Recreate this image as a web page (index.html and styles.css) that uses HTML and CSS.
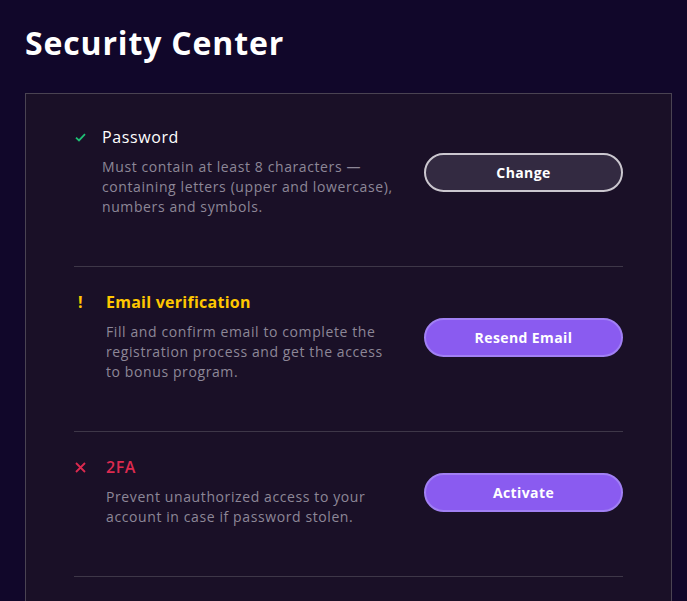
FILE: index.html
```html
<!DOCTYPE html>
<html lang="en">
<head>
<meta charset="utf-8">
<title>Security Center</title>
<link rel="stylesheet" href="styles.css">
</head>
<body>
<main class="page">
  <h1 class="page-title">Security Center</h1>
  <section class="card">
    <div class="row">
      <div class="info">
        <div class="head head--ok">
          <span class="icon icon--narrow">
            <svg width="11" height="9" viewBox="0 0 11 9"><path d="M1 4.6 L4 7.4 L10 1.2" fill="none" stroke="#1fbf75" stroke-width="1.8"/></svg>
          </span>
          <span class="title">Password</span>
        </div>
        <p class="desc">Must contain at least 8 characters — containing letters (upper and lowercase), numbers and symbols.</p>
      </div>
      <button class="btn btn--ghost">Change</button>
    </div>
    <div class="row">
      <div class="info">
        <div class="head head--warn">
          <span class="icon icon--wide"><span class="bang">!</span></span>
          <span class="title title--strong">Email verification</span>
        </div>
        <p class="desc desc--indent">Fill and confirm email to complete the registration process and get the access to bonus program.</p>
      </div>
      <button class="btn btn--primary">Resend Email</button>
    </div>
    <div class="row">
      <div class="info">
        <div class="head head--bad">
          <span class="icon icon--wide">
            <svg width="11" height="11" viewBox="0 0 11 11"><path d="M1 1 L10 10 M10 1 L1 10" fill="none" stroke="#dc2a4f" stroke-width="1.8"/></svg>
          </span>
          <span class="title">2FA</span>
        </div>
        <p class="desc desc--indent">Prevent unauthorized access to your account in case if password stolen.</p>
      </div>
      <button class="btn btn--primary">Activate</button>
    </div>
  </section>
</main>
</body>
</html>
```
FILE: styles.css
```css
* { box-sizing: border-box; }
html, body { margin: 0; padding: 0; }
body {
  background: #11072a;
  font-family: "Open Sans", "DejaVu Sans", sans-serif;
  color: #ffffff;
}
.page {
  padding: 23px 15px 0 25px;
}
.page-title {
  margin: 0;
  font-size: 32px;
  line-height: 40px;
  font-weight: 700;
  letter-spacing: 0.85px;
  color: #ffffff;
}
.card {
  margin-top: 30px;
  background: #1a1027;
  border: 1px solid #4a4352;
  border-bottom: none;
  padding: 33px 48px 0 48px;
  min-height: 520px;
}
.row {
  display: flex;
  align-items: center;
  justify-content: space-between;
  padding: 0 0 49px 0;
  border-bottom: 1px solid #3e3748;
}
.row + .row {
  padding-top: 25px;
}
.info {
  width: 330px;
}
.head {
  display: flex;
  align-items: center;
  height: 20px;
}
.icon {
  display: flex;
  align-items: center;
  padding-left: 1px;
}
.icon--narrow { width: 28px; }
.icon--wide { width: 32px; }
.bang {
  color: #ffc700;
  font-weight: 700;
  font-size: 16px;
  padding-left: 3px;
}
.title {
  font-size: 16px;
  line-height: 20px;
  font-weight: 500;
  letter-spacing: 0.6px;
}
.title--strong { font-weight: 700; letter-spacing: 0.25px; }
.head--ok .title { color: #ffffff; }
.head--warn .title { color: #ffc700; }
.head--bad .title { color: #dc2a4f; font-weight: 600; }
.desc {
  margin: 10px 0 0 28px;
  width: 298px;
  font-size: 14px;
  line-height: 20px;
  letter-spacing: 0.6px;
  color: #8d8797;
}
.desc--indent { margin-left: 32px; width: 286px; }
.btn {
  width: 199px;
  height: 39px;
  border-radius: 20px;
  font-family: inherit;
  font-size: 14px;
  font-weight: 700;
  letter-spacing: 0.4px;
  color: #ffffff;
  cursor: pointer;
}
.btn--ghost {
  background: #332a41;
  border: 2px solid #cbc7cf;
}
.btn--primary {
  background: #8a5bf0;
  border: 2px solid #a180f4;
}
```
